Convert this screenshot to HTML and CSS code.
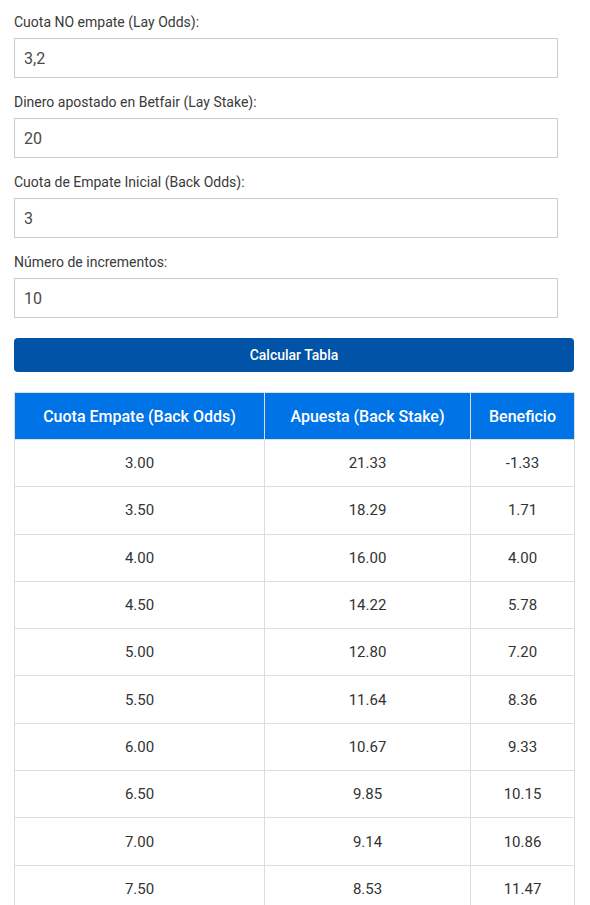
FILE: index.html
```html
<!DOCTYPE html>
<html>
<head>
    <meta charset="utf-8">
    <link rel="stylesheet" href="styles.css">
</head>
<body>
    <div class="calc">
      <div class="field">
        <label for="layOdds">Cuota NO empate (Lay Odds):</label>
        <input type="text" id="layOdds" value="3,2">
      </div>
      <div class="field">
        <label for="layStake">Dinero apostado en Betfair (Lay Stake):</label>
        <input type="text" id="layStake" value="20">
      </div>
      <div class="field">
        <label for="backOdds">Cuota de Empate Inicial (Back Odds):</label>
        <input type="text" id="backOdds" value="3">
      </div>
      <div class="field">
        <label for="steps">Número de incrementos:</label>
        <input type="text" id="steps" value="10">
      </div>
      <button class="calc-btn">Calcular Tabla</button>
      <table class="result">
        <thead>
          <tr>
            <th class="col-odds">Cuota Empate (Back Odds)</th>
            <th class="col-stake">Apuesta (Back Stake)</th>
            <th class="col-profit">Beneficio</th>
          </tr>
        </thead>
        <tbody>
          <tr><td>3.00</td><td>21.33</td><td>-1.33</td></tr>
          <tr><td>3.50</td><td>18.29</td><td>1.71</td></tr>
          <tr><td>4.00</td><td>16.00</td><td>4.00</td></tr>
          <tr><td>4.50</td><td>14.22</td><td>5.78</td></tr>
          <tr><td>5.00</td><td>12.80</td><td>7.20</td></tr>
          <tr><td>5.50</td><td>11.64</td><td>8.36</td></tr>
          <tr><td>6.00</td><td>10.67</td><td>9.33</td></tr>
          <tr><td>6.50</td><td>9.85</td><td>10.15</td></tr>
          <tr><td>7.00</td><td>9.14</td><td>10.86</td></tr>
          <tr><td>7.50</td><td>8.53</td><td>11.47</td></tr>
        </tbody>
      </table>
    </div>
</body>
</html>
```

FILE: styles.css
```css
* {
margin: 0;
padding: 0;
box-sizing: border-box;
font-family: Roboto, "Liberation Sans", sans-serif;
}

body {
background: #ffffff;
color: #333333;
}

.calc {
width: 560px;
margin: 14px 0 0 14px;
}

.field {
margin-bottom: 16px;
}

.field label {
display: block;
font-size: 14px;
line-height: 16px;
color: #3a3a3a;
margin-bottom: 8px;
}

.field input {
display: block;
width: 544px;
height: 40px;
padding: 0 9px;
border: 1px solid #cccccc;
font-size: 16px;
color: #4a4a4a;
background: #ffffff;
outline: none;
}

.calc-btn {
display: block;
width: 560px;
height: 34px;
margin-top: 20px;
border: none;
border-radius: 4px;
background-color: #0053a6;
color: #ffffff;
font-size: 14px;
font-weight: 500;
cursor: pointer;
}

.result {
width: 560px;
margin-top: 20px;
border-collapse: collapse;
table-layout: fixed;
}

.result th,
.result td {
border: 1px solid #dddddd;
text-align: center;
}

.result th {
height: 47px;
background-color: #0073e6;
color: #ffffff;
font-size: 16px;
font-weight: 500;
}

.result td {
height: 47.3px;
font-size: 15px;
color: #333333;
}

.col-odds {
width: 250px;
}

.col-stake {
width: 206px;
}

.col-profit {
width: 104px;
}
```
